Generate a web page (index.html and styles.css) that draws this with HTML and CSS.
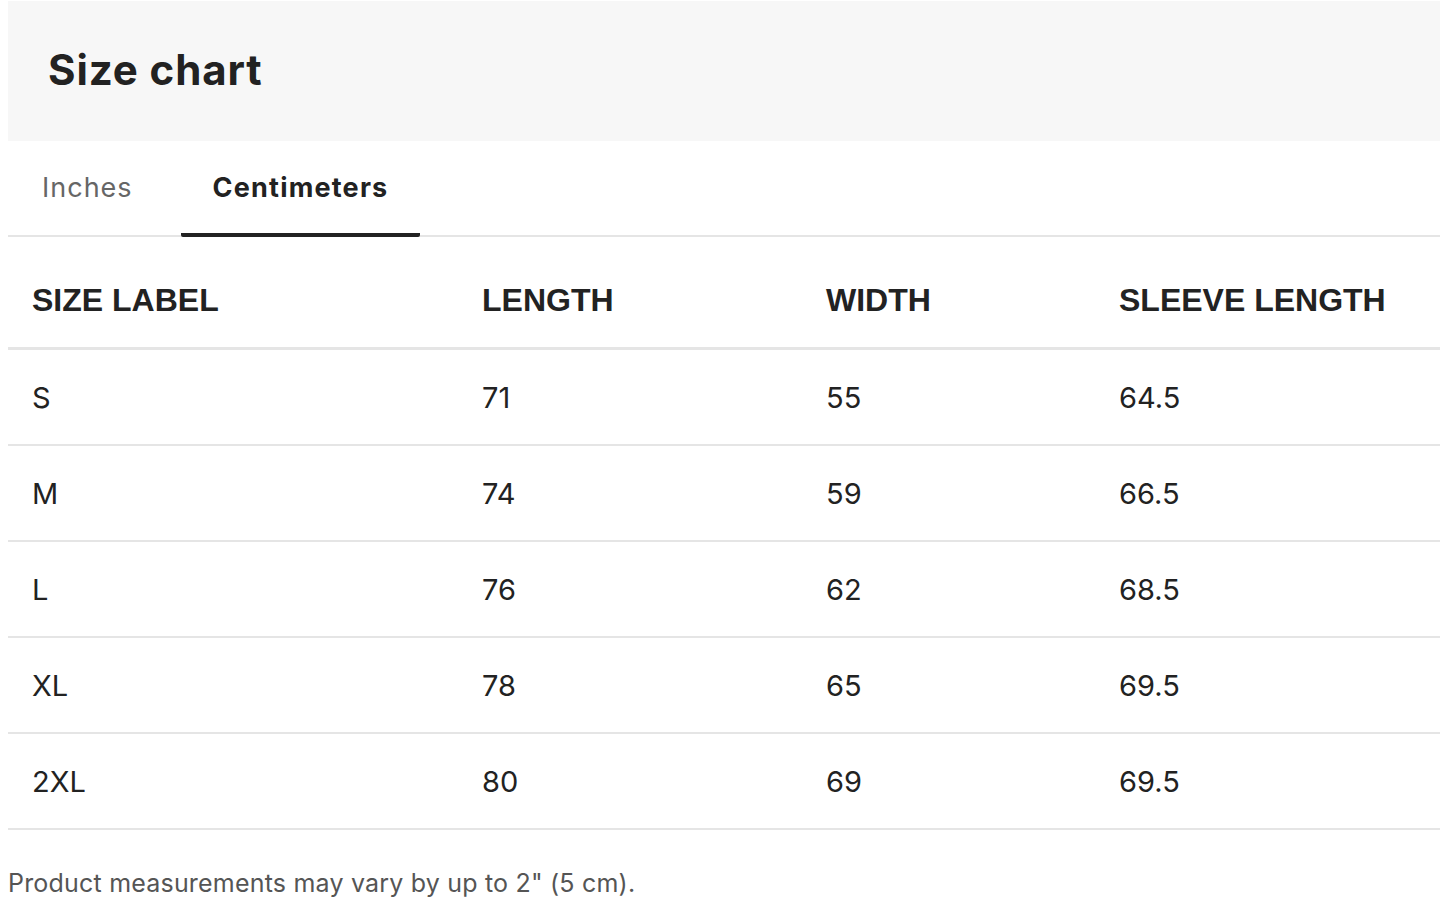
FILE: index.html
```html
<!DOCTYPE html>
<html lang="en">
<head>
<meta charset="utf-8">
<title>Size chart</title>
<link rel="stylesheet" href="styles.css">
</head>
<body>
<div class="sheet">
  <div class="head"><h1 class="title">Size chart</h1></div>
  <div class="tabs">
    <div class="tab">Inches</div>
    <div class="tab active">Centimeters</div>
  </div>
  <table class="chart">
    <thead>
      <tr><th class="c1">SIZE LABEL</th><th class="c2">LENGTH</th><th class="c3">WIDTH</th><th class="c4">SLEEVE LENGTH</th></tr>
    </thead>
    <tbody>
      <tr><td>S</td><td>71</td><td>55</td><td>64.5</td></tr>
      <tr><td>M</td><td>74</td><td>59</td><td>66.5</td></tr>
      <tr><td>L</td><td>76</td><td>62</td><td>68.5</td></tr>
      <tr><td>XL</td><td>78</td><td>65</td><td>69.5</td></tr>
      <tr><td>2XL</td><td>80</td><td>69</td><td>69.5</td></tr>
    </tbody>
  </table>
  <p class="note">Product measurements may vary by up to 2" (5 cm).</p>
</div>
</body>
</html>
```
FILE: styles.css
```css
html, body { margin: 0; padding: 0; background: #fff; }
body { padding: 1px 0 0 8px; font-family: Inter, "Noto Sans", sans-serif; color: #222; }
.sheet { width: 1432px; }
.head { background: #f7f7f7; height: 140px; display: flex; align-items: center; padding: 0 0 4px 40px; box-sizing: border-box; }
.title { margin: 0; font-size: 42px; font-weight: 700; color: #222; letter-spacing: 0.9px; }
.tabs { display: flex; gap: 16px; border-bottom: 2px solid #e5e5e5; height: 96px; box-sizing: border-box; padding-left: 2px; }
.tab { padding: 0 32px; display: flex; align-items: center; font-size: 27px; color: #666; margin-bottom: -2px; border-bottom: 4px solid transparent; letter-spacing: 1px; }
.tab.active { color: #222; font-weight: 700; border-bottom-color: #222; border-radius: 2px; letter-spacing: 1.2px; }
.chart { width: 100%; border-collapse: collapse; table-layout: fixed; }
.chart th { font-family: "Liberation Sans", Arial, sans-serif; font-size: 32px; font-weight: 700; text-align: left; padding: 16px 0 0 24px; height: 94px; border-bottom: 3px solid #e5e5e5; color: #222; white-space: nowrap; }
.c1 { width: 426px; } .c2 { width: 320px; } .c3 { width: 269px; }
.chart td { font-size: 29px; padding: 0 0 0 24px; height: 94px; border-bottom: 2px solid #e5e5e5; color: #222; }
.note { margin: 38px 0 0 0; font-size: 25px; color: #555; letter-spacing: 0.2px; }
```
